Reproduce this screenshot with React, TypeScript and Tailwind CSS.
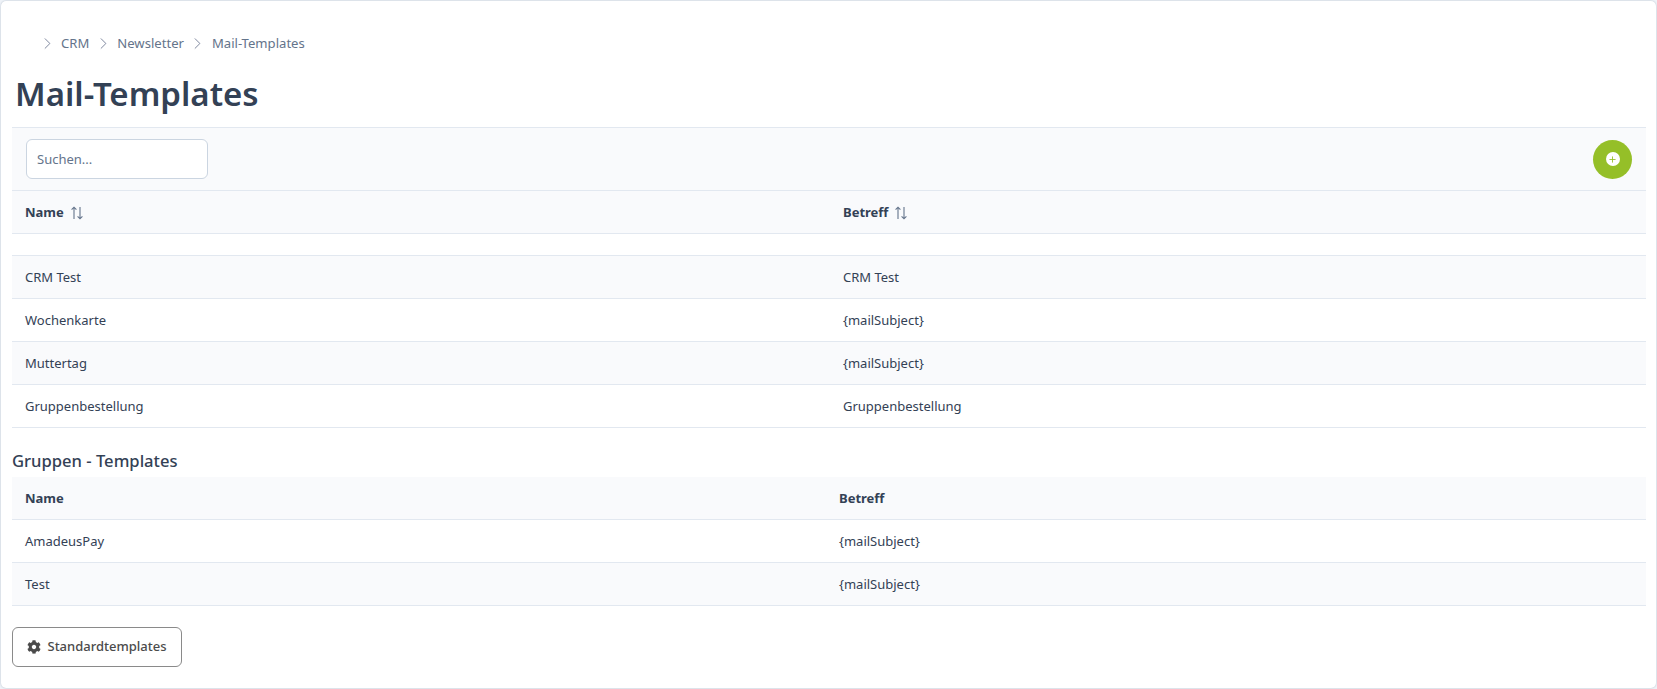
import React from 'react';
import { ChevronRight } from 'lucide-react';
import { FaCog } from 'react-icons/fa';

const templates = [
  { name: 'CRM Test', subject: 'CRM Test' },
  { name: 'Wochenkarte', subject: '{mailSubject}' },
  { name: 'Muttertag', subject: '{mailSubject}' },
  { name: 'Gruppenbestellung', subject: 'Gruppenbestellung' },
];

const groupTemplates = [
  { name: 'AmadeusPay', subject: '{mailSubject}' },
  { name: 'Test', subject: '{mailSubject}' },
];

const SortIcon = () => (
  <svg width="14" height="14" viewBox="0 0 14 14" fill="none" stroke="#64748b" strokeWidth="1.1" className="ml-[6px]">
    <path d="M4 13V1.2M1.6 3.6 4 1.2l2.4 2.4" />
    <path d="M10 1v11.8M7.6 10.4 10 12.8l2.4-2.4" />
  </svg>
);

const Crumb = ({ label }: { label: string }) => (
  <>
    <ChevronRight size={19} strokeWidth={1.1} className="mx-[4.5px] text-[#6b7690]" />
    <span>{label}</span>
  </>
);

const App = () => {
  return (
    <div className="h-[689px] w-[1657px] overflow-hidden bg-[#eff3f8] p-px font-['Noto_Sans',sans-serif] text-[13px] text-[#334155]">
      <div className="h-[687px] rounded-[5px] bg-white pl-[11px] pr-[10px] shadow-[0_0_2px_rgba(100,116,139,0.45)]">
        <div className="flex h-[86px] items-center pb-[1px] pl-[21px] text-[13.1px] text-[#64748b]">
          <Crumb label="CRM" />
          <Crumb label="Newsletter" />
          <Crumb label="Mail-Templates" />
        </div>
        <h1 className="-mt-[20px] h-[60px] pl-[3px] text-[33px] leading-[54px] font-semibold text-[#334155]">Mail-Templates</h1>

        <div className="flex h-[64px] items-center justify-between border-y border-[#e2e8f0] bg-[#f9fafc] pr-[14px] pl-[14px]">
          <div className="flex h-[40px] w-[182px] items-center rounded-[6px] border border-[#cbd5e1] bg-white px-[10px] pt-[2px] text-[13px] text-[#64748b]">
            Suchen...
          </div>
          <button className="flex h-[39px] w-[39px] items-center justify-center rounded-full bg-[#95bf28]">
            <span className="flex h-[14px] w-[14px] items-center justify-center rounded-full bg-white text-[#95bf28]">
              <svg width="7" height="7" viewBox="0 0 8 8" stroke="currentColor" strokeWidth="1">
                <path d="M4 .5v7M.5 4h7" />
              </svg>
            </span>
          </button>
        </div>

        <div className="grid h-[43px] grid-cols-[818px_1fr] items-center border-b border-[#e2e8f0] bg-[#f9fafc] px-[13px] pt-[2px] font-bold">
          <div className="flex items-center">
            Name
            <SortIcon />
          </div>
          <div className="flex items-center">
            Betreff
            <SortIcon />
          </div>
        </div>
        <div className="h-[22px] border-b border-[#e2e8f0]" />
        {templates.map((row, i) => (
          <div
            key={row.name}
            className={`grid h-[43px] grid-cols-[818px_1fr] items-center border-b border-[#e2e8f0] px-[13px] pt-[2px] ${i % 2 === 0 ? 'bg-[#f9fafc]' : 'bg-white'}`}
          >
            <div>{row.name}</div>
            <div>{row.subject}</div>
          </div>
        ))}

        <h2 className="h-[49px] pt-[21px] text-[16.6px] leading-[24px] font-medium text-[#334155]">Gruppen - Templates</h2>

        <div className="grid h-[43px] grid-cols-[814px_1fr] items-center border-b border-[#e2e8f0] bg-[#f9fafc] px-[13px] pt-[2px] font-bold">
          <div>Name</div>
          <div>Betreff</div>
        </div>
        {groupTemplates.map((row, i) => (
          <div
            key={row.name}
            className={`grid h-[43px] grid-cols-[814px_1fr] items-center border-b border-[#e2e8f0] px-[13px] pt-[2px] ${i % 2 === 1 ? 'bg-[#f9fafc]' : 'bg-white'}`}
          >
            <div>{row.name}</div>
            <div>{row.subject}</div>
          </div>
        ))}

        <button className="mt-[21px] flex h-[40px] w-[170px] items-center justify-center gap-[6px] rounded-[6px] border border-[#8a8a8a] bg-white text-[13px] font-medium text-[#4b4b4b]">
          <FaCog size={14} className="text-[#4b4b4b]" />
          Standardtemplates
        </button>
      </div>
    </div>
  );
};

export default App;
